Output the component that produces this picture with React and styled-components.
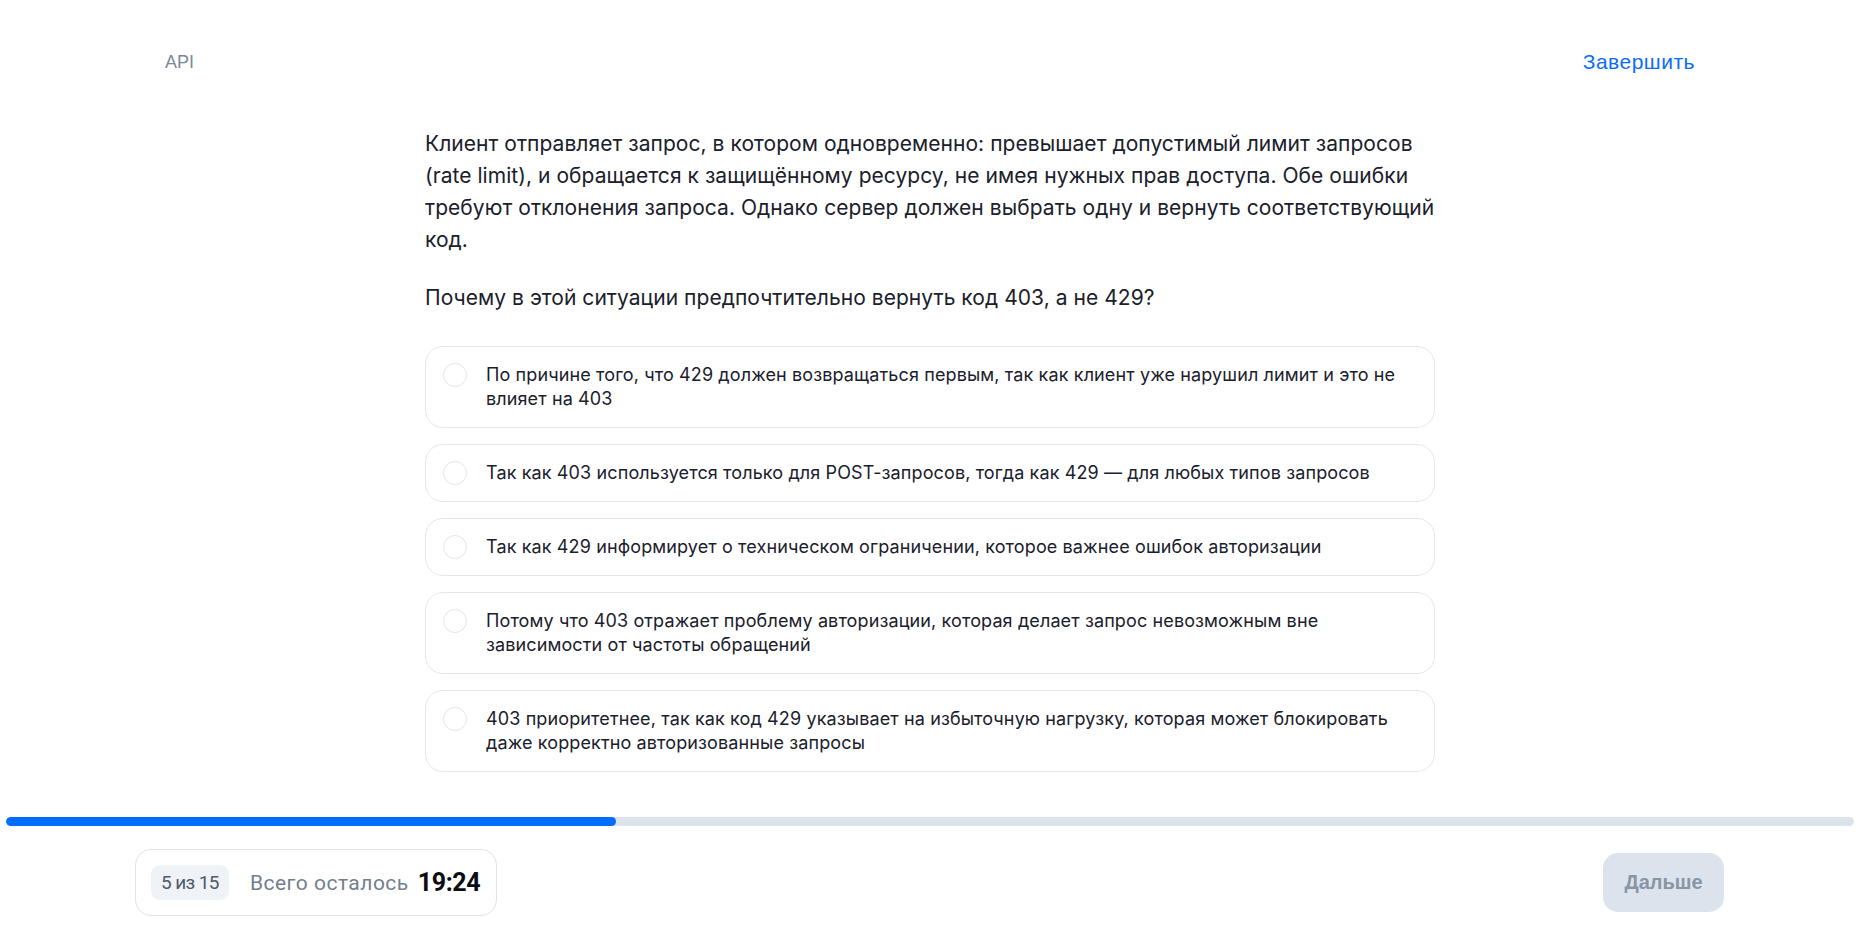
import React, { useState } from "react";
import styled, { createGlobalStyle } from "styled-components";

const GlobalStyle = createGlobalStyle`
  html, body {
    margin: 0;
    padding: 0;
    background: #ffffff;
  }
  body {
    font-family: Inter, "Noto Sans", sans-serif;
  }
  * {
    box-sizing: border-box;
  }
`;

const answers = [
  "По причине того, что 429 должен возвращаться первым, так как клиент уже нарушил лимит и это не влияет на 403",
  "Так как 403 используется только для POST-запросов, тогда как 429 — для любых типов запросов",
  "Так как 429 информирует о техническом ограничении, которое важнее ошибок авторизации",
  "Потому что 403 отражает проблему авторизации, которая делает запрос невозможным вне зависимости от частоты обращений",
  "403 приоритетнее, так как код 429 указывает на избыточную нагрузку, которая может блокировать даже корректно авторизованные запросы",
];

const current = 5;
const total = 15;

const App = () => {
  const [picked, setPicked] = useState(null);
  const pct = (current / total) * 100;
  return (
    <Page>
      <GlobalStyle />
      <Header>
        <Topic>API</Topic>
        <FinishLink href="#">Завершить</FinishLink>
      </Header>

      <Main>
        <Question>
          Клиент отправляет запрос, в котором одновременно: превышает допустимый
          лимит запросов (rate limit), и обращается к защищённому ресурсу, не
          имея нужных прав доступа. Обе ошибки требуют отклонения запроса.
          Однако сервер должен выбрать одну и вернуть соответствующий код.
        </Question>
        <Question $second>
          Почему в этой ситуации предпочтительно вернуть код 403, а не 429?
        </Question>

        <Options>
          {answers.map((text, i) => (
            <Option key={i} onClick={() => setPicked(i)}>
              <Radio $active={picked === i} />
              <OptionText>{text}</OptionText>
            </Option>
          ))}
        </Options>
      </Main>

      <Progress>
        <ProgressFill style={{ width: `calc(${pct}% - 6px)` }} />
      </Progress>

      <Footer>
        <TimerCard>
          <Counter>
            {current} из {total}
          </Counter>
          <TimeLabel>Всего осталось</TimeLabel>
          <TimeValue>19:24</TimeValue>
        </TimerCard>
        <NextButton disabled={picked === null}>Дальше</NextButton>
      </Footer>
    </Page>
  );
};

export default App;

const Page = styled.div`
  min-height: 100vh;
  display: flex;
  flex-direction: column;
`;

const Header = styled.header`
  display: flex;
  justify-content: space-between;
  align-items: center;
  padding: 48px 165px 0;
`;

const Topic = styled.span`
  font-family: "Liberation Sans", Arial, sans-serif;
  font-size: 18px;
  line-height: 28px;
  color: #7c889a;
`;

const FinishLink = styled.a`
  font-family: "Liberation Sans", Arial, sans-serif;
  font-size: 21px;
  line-height: 28px;
  letter-spacing: 0.5px;
  color: #0a6cff;
  text-decoration: none;
`;

const Main = styled.main`
  width: 1010px;
  margin: 52px auto 0;
`;

const Question = styled.p`
  margin: ${(p) => (p.$second ? "26px 0 0" : "0")};
  font-size: 21px;
  line-height: 32px;
  color: #1a202c;
  letter-spacing: 0.05px;
`;

const Options = styled.div`
  display: flex;
  flex-direction: column;
  gap: 16px;
  margin-top: 32px;
`;

const Option = styled.div`
  display: flex;
  align-items: flex-start;
  gap: 19px;
  padding: 16px 24px 16px 17px;
  border: 1px solid #e3e7ee;
  border-radius: 18px;
  cursor: pointer;
`;

const Radio = styled.span`
  flex: none;
  width: 24px;
  height: 24px;
  border-radius: 50%;
  border: 1.5px solid ${(p) => (p.$active ? "#0a6cff" : "#dfe4eb")};
  box-shadow: ${(p) => (p.$active ? "inset 0 0 0 5px #0a6cff" : "none")};
`;

const OptionText = styled.span`
  font-size: 18px;
  line-height: 24px;
  color: #1a202c;
  letter-spacing: 0.12px;
`;

const Progress = styled.div`
  height: 9px;
  margin: 45px 6px 0;
  border-radius: 5px;
  background: #dde3eb;
  overflow: hidden;
`;

const ProgressFill = styled.div`
  height: 100%;
  border-radius: 5px;
  background: #006dff;
`;

const Footer = styled.footer`
  display: flex;
  justify-content: space-between;
  align-items: center;
  padding: 23px 136px 20px 135px;
`;

const TimerCard = styled.div`
  display: flex;
  align-items: center;
  height: 67px;
  padding: 0 16px 0 15px;
  border: 1px solid #dfe4ec;
  border-radius: 16px;
`;

const Counter = styled.span`
  display: inline-flex;
  align-items: center;
  height: 35px;
  padding: 0 10px;
  border-radius: 9px;
  background: #eff3f8;
  font-family: Roboto, sans-serif;
  font-size: 19px;
  letter-spacing: -0.6px;
  color: #505a68;
`;

const TimeLabel = styled.span`
  margin-left: 21px;
  font-family: Roboto, sans-serif;
  font-size: 21px;
  letter-spacing: 0.5px;
  color: #737e8e;
`;

const TimeValue = styled.span`
  margin-left: 9px;
  font-family: Roboto, sans-serif;
  font-size: 25px;
  font-weight: 700;
  letter-spacing: -0.4px;
  color: #0b0d12;
`;

const NextButton = styled.button`
  width: 121px;
  height: 59px;
  border: none;
  border-radius: 15px;
  background: #dce3ec;
  font-family: "Liberation Sans", Arial, sans-serif;
  font-size: 20px;
  font-weight: 700;
  color: #8795a6;
  cursor: pointer;

  &:disabled {
    cursor: default;
  }
`;
